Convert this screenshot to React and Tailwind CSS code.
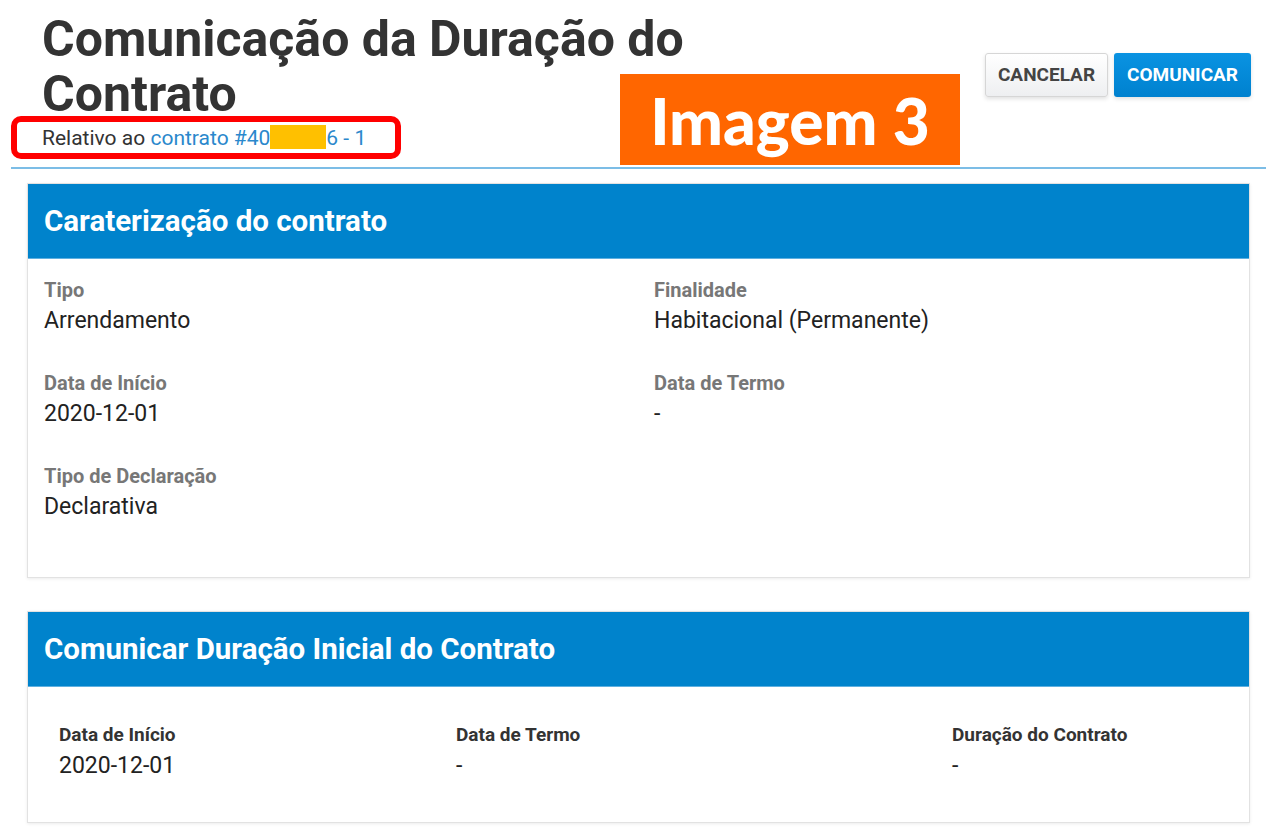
import React from 'react';

function Field({label, value, muted}) {
  return (
    <div>
      <div className={muted ? 'text-[20px] leading-[26px] font-bold text-[#777]' : 'text-[19px] leading-[24px] font-bold text-[#333]'}>{label}</div>
      <div className={`${muted ? 'mt-[3px]' : 'mt-[4px]'} text-[23px] leading-[30px] text-[#222]`}>{value}</div>
    </div>
  )
}

function CardHeader({title}) {
  return (
    <div className="h-[75px] bg-[#0083cc] border-b border-[#5fb0e0] flex items-center pl-[16px]">
      <h2 className="text-white text-[29.5px] font-bold">{title}</h2>
    </div>
  )
}

export default function App() {
  return (
    <div className="min-h-[832px] bg-white font-['Roboto',sans-serif] pl-[11px] pr-[14px]">
      <div className="relative flex justify-between items-start pl-[31px] pb-[15px]">
        <div>
          <h1 className="max-w-[700px] pt-[12px] text-[50px] leading-[55px] font-bold text-[#333]">
            Comunicação da Duração do Contrato
          </h1>
          <div className="relative mt-[2px] text-[21px] leading-[28px] text-[#333]">
            Relativo ao{' '}
            <a className="text-[#2a88cc]">
              contrato #40<span className="inline-block align-[-4px] w-[56px] h-[24px] bg-[#ffc000]"></span>6 - 1
            </a>
            <div className="absolute left-[-31px] top-[-8px] w-[390px] h-[43px] border-[6px] border-[#ff0000] rounded-[10px]"></div>
          </div>
        </div>
        <div className="flex gap-[6px] mt-[53px] mr-[15px]">
          <button className="h-[44px] w-[123px] rounded-[3px] border border-[#d6d6d6] bg-gradient-to-b from-white to-[#eeeff1] text-[#444] text-[19px] font-bold shadow-[0_2px_4px_rgba(0,0,0,0.12)]">
            CANCELAR
          </button>
          <button className="h-[44px] w-[137px] rounded-[3px] bg-gradient-to-b from-[#0a93e2] to-[#0081cf] text-white text-[19px] font-bold shadow-[0_2px_4px_rgba(0,0,0,0.12)]">
            COMUNICAR
          </button>
        </div>
        <div className="absolute left-[609px] top-[74px] w-[340px] h-[91px] bg-[#ff6600] flex items-center justify-center">
          <span className="font-['Lato',sans-serif] font-black text-white text-[64px] leading-none pt-[2px]">Imagem 3</span>
        </div>
      </div>

      <div className="h-[2px] bg-[#7cbde6]"></div>

      <div className="px-4 pt-[14px]">
        <div className="border border-[#e2e2e2] shadow-[0_1px_3px_rgba(0,0,0,0.08)]">
          <CardHeader title="Caraterização do contrato" />
          <div className="grid grid-cols-2 gap-x-[31px] gap-y-[34px] px-[16px] pt-[18px] pb-[55px]">
            <Field muted label="Tipo" value="Arrendamento" />
            <Field muted label="Finalidade" value="Habitacional (Permanente)" />
            <Field muted label="Data de Início" value="2020-12-01" />
            <Field muted label="Data de Termo" value="-" />
            <Field muted label="Tipo de Declaração" value="Declarativa" />
          </div>
        </div>

        <div className="mt-[33px] border border-[#e2e2e2] shadow-[0_1px_3px_rgba(0,0,0,0.08)]">
          <CardHeader title="Comunicar Duração Inicial do Contrato" />
          <div className="grid grid-cols-[397px_496px_1fr] px-[31px] pt-[36px] pb-[41px]">
            <Field label="Data de Início" value="2020-12-01" />
            <Field label="Data de Termo" value="-" />
            <Field label="Duração do Contrato" value="-" />
          </div>
        </div>
      </div>
    </div>
  )
}
